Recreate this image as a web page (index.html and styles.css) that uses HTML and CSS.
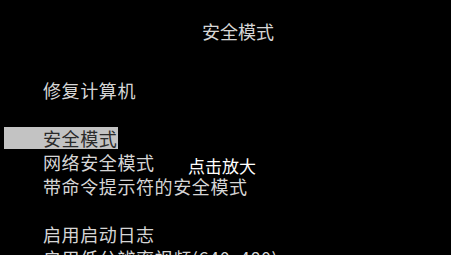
FILE: index.html
```html
<!DOCTYPE html>
<html lang="zh">
<head>
<meta charset="utf-8">
<link rel="stylesheet" href="styles.css">
</head>
<body>
<div class="screen">
  <div class="title">安全模式</div>
  <ul class="menu">
    <li class="item">修复计算机</li>
    <li class="item blank"></li>
    <li class="item"><span class="selected">安全模式</span></li>
    <li class="item">网络安全模式</li>
    <li class="item">带命令提示符的安全模式</li>
    <li class="item blank"></li>
    <li class="item">启用启动日志</li>
    <li class="item">启用低分辨率视频(640x480)</li>
  </ul>
  <div class="zoom-hint">点击放大</div>
</div>
</body>
</html>
```
FILE: styles.css
```css
html, body {
  margin: 0;
  padding: 0;
  background: #000;
}
.screen {
  position: relative;
  width: 451px;
  height: 255px;
  overflow: hidden;
  background: #000;
  color: #d6d6d6;
  font-family: "Noto Sans CJK SC", "DejaVu Sans", sans-serif;
  font-size: 18px;
  box-sizing: border-box;
  padding-top: 19px;
}
.title {
  height: 24px;
  line-height: 24px;
  padding-left: 202px;
  white-space: nowrap;
}
.menu {
  list-style: none;
  margin: 35px 0 0 0;
  padding: 0 0 0 43px;
  letter-spacing: 0.6px;
}
.item {
  height: 24px;
  line-height: 24px;
  white-space: nowrap;
  display: flex;
  align-items: center;
}
.selected {
  display: block;
  background: #c3c3c3;
  color: #2a2a2a;
  height: 22px;
  line-height: 22px;
  margin-left: -39px;
  padding-left: 39px;
  padding-right: 1px;
}
.zoom-hint {
  position: absolute;
  left: 188px;
  top: 157px;
  color: #fff;
  font-size: 17px;
  font-weight: 400;
  line-height: 17px;
  white-space: nowrap;
}
```
